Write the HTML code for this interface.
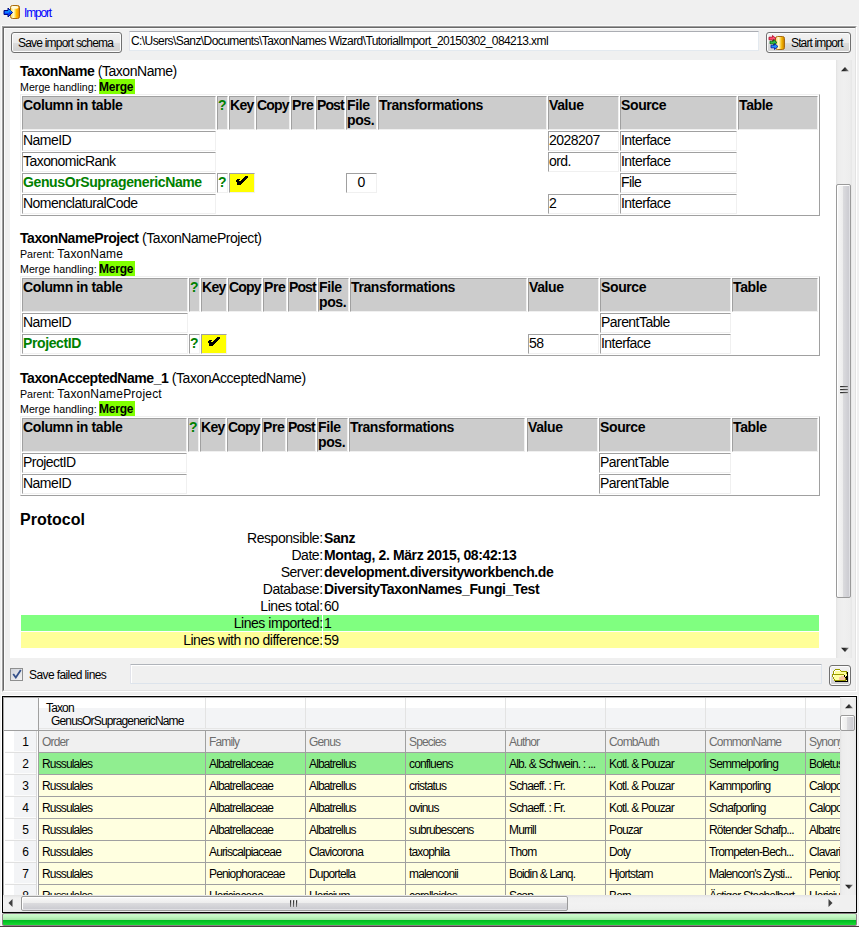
<!DOCTYPE html>
<html><head><meta charset="utf-8"><style>
html,body{margin:0;padding:0;}
body{width:859px;height:927px;position:relative;overflow:hidden;background:#f0f0f0;font-family:"Liberation Sans", sans-serif;color:#000;}
.t{position:absolute;white-space:pre;}
.r{position:absolute;}
</style></head><body>

<svg style="position:absolute;left:3px;top:4px" width="18" height="16" viewBox="0 0 18 16">
<defs><linearGradient id="cyl" x1="0" x2="1" y1="0" y2="0"><stop offset="0" stop-color="#f7d35a"/><stop offset="0.35" stop-color="#fffbd0"/><stop offset="0.65" stop-color="#ffc400"/><stop offset="0.85" stop-color="#ff9a00"/><stop offset="1" stop-color="#c57a00"/></linearGradient></defs>
<rect x="7.5" y="1.5" width="9" height="13" rx="2" fill="url(#cyl)" stroke="#a86a10" stroke-width="1"/><ellipse cx="11.8" cy="3.4" rx="3.6" ry="1.3" fill="#fffbe0"/>
<path d="M1 6.5 H5 V4 L9.5 8.5 L5 13 V10.5 H1 Z" fill="#0a40ff" stroke="#000a80" stroke-width="1"/><path d="M2 8 H6 V5.8 M6.5 6 L8.5 8.3" fill="none" stroke="#10b8ff" stroke-width="1"/>
</svg>
<div class="t" style="left:24px;top:6.84px;font-size:12px;line-height:12px;color:#0000ff;letter-spacing:-1.2px;">Import</div>
<div class="r" style="left:1px;top:25px;width:857px;height:668px;border-top:1px solid #fafafa;border-left:1px solid #fafafa;box-sizing:border-box;"></div>
<div class="r" style="left:2px;top:26px;width:855px;height:666px;border-top:1px solid #a0a0a0;border-left:1px solid #a0a0a0;border-right:1px solid #ffffff;border-bottom:1px solid #ffffff;box-sizing:border-box;"></div>
<div class="r" style="left:3px;top:27px;width:853px;height:664px;border-top:1px solid #696969;border-left:1px solid #696969;border-right:1px solid #e3e3e3;border-bottom:1px solid #e3e3e3;box-sizing:border-box;"></div>
<div class="r" style="left:4px;top:28px;width:851px;height:662px;border-top:1px solid #fbfbfb;border-left:1px solid #fbfbfb;box-sizing:border-box;"></div>
<div class="r" style="left:11px;top:32px;width:111px;height:21px;border:1px solid #707070;border-radius:3px;box-sizing:border-box;background:linear-gradient(#f2f2f2 0%,#ebebeb 50%,#dddddd 51%,#cfcfcf 100%);box-shadow:inset 0 0 0 1px #fcfcfc;"></div>
<div class="t" style="left:18px;top:36.84px;font-size:12px;line-height:12px;letter-spacing:-0.79px;">Save import schema</div>
<div class="r" style="left:129px;top:31px;width:630px;height:20px;background:#fff;border:1px solid #abadb3;border-left-color:#e2e3ea;border-right-color:#e3e9ef;border-bottom-color:#e3e9ef;box-sizing:border-box;"></div>
<div class="t" style="left:131px;top:34.84px;font-size:12px;line-height:12px;letter-spacing:-0.58px;">C:\Users\Sanz\Documents\TaxonNames Wizard\TutorialImport_20150302_084213.xml</div>
<div class="r" style="left:766px;top:32px;width:85px;height:21px;border:1px solid #707070;border-radius:3px;box-sizing:border-box;background:linear-gradient(#f2f2f2 0%,#ebebeb 50%,#dddddd 51%,#cfcfcf 100%);box-shadow:inset 0 0 0 1px #fcfcfc;"></div>
<svg style="position:absolute;left:768px;top:34px" width="18" height="17" viewBox="0 0 18 17">
<defs><linearGradient id="cyl2" x1="0" x2="1" y1="0" y2="0"><stop offset="0" stop-color="#f7d35a"/><stop offset="0.35" stop-color="#fffbd0"/><stop offset="0.7" stop-color="#f3b400"/><stop offset="1" stop-color="#c57a00"/></linearGradient></defs>
<rect x="7.5" y="2.5" width="9" height="13" rx="2" fill="url(#cyl2)" stroke="#a86a10" stroke-width="1"/>
<path d="M1 3.2 H4.5 V1.5 L8 4.5 L4.5 7.5 V5.8 H1 Z" fill="#ff5070" stroke="#b00020" stroke-width="0.8"/>
<path d="M2 7.2 H5.5 V5.5 L9 8.5 L5.5 11.5 V9.8 H2 Z" fill="#30c040" stroke="#006010" stroke-width="0.8"/>
<path d="M3 11.2 H6.5 V9.5 L10 12.5 L6.5 15.5 V13.8 H3 Z" fill="#2090ff" stroke="#0010a0" stroke-width="0.8"/>
</svg>
<div class="t" style="left:791px;top:36.84px;font-size:12px;line-height:12px;letter-spacing:-0.86px;">Start import</div>
<div class="r" style="left:10px;top:60px;width:826px;height:598px;background:#fff;"></div>
<div class="t" style="left:20px;top:64.15px;font-size:14px;line-height:14px;letter-spacing:-0.45px;"><b>TaxonName</b> (TaxonName)</div>
<div class="t" style="left:20px;top:82.47px;font-size:10.67px;line-height:10.67px;letter-spacing:0.02px;">Merge handling: </div>
<div class="r" style="left:99px;top:79px;width:36px;height:16px;background:#80ff00;"></div>
<div class="t" style="left:99px;top:81.34px;font-size:12px;line-height:12px;font-weight:bold;letter-spacing:-0.2px;">Merge</div>
<div class="r" style="left:20px;top:94px;width:800px;height:122px;border-top:1px solid #f0f0f0;border-left:1px solid #f0f0f0;border-right:1px solid #a0a0a0;border-bottom:1px solid #a0a0a0;box-sizing:border-box;"></div>
<div class="r" style="left:22px;top:96px;width:194px;height:34px;background:#cccccc;border-top:1px solid #a0a0a0;border-left:1px solid #a0a0a0;border-right:1px solid #f0f0f0;border-bottom:1px solid #f0f0f0;box-sizing:border-box;"></div>
<div class="t" style="left:23px;top:98.15px;font-size:14px;line-height:14px;font-weight:bold;letter-spacing:-0.38px;">Column in table</div>
<div class="r" style="left:217px;top:96px;width:11px;height:34px;background:#cccccc;border-top:1px solid #a0a0a0;border-left:1px solid #a0a0a0;border-right:1px solid #f0f0f0;border-bottom:1px solid #f0f0f0;box-sizing:border-box;"></div>
<div class="t" style="left:218px;top:98.15px;font-size:14px;line-height:14px;font-weight:bold;color:#008000;">?</div>
<div class="r" style="left:229px;top:96px;width:26px;height:34px;background:#cccccc;border-top:1px solid #a0a0a0;border-left:1px solid #a0a0a0;border-right:1px solid #f0f0f0;border-bottom:1px solid #f0f0f0;box-sizing:border-box;"></div>
<div class="t" style="left:230px;top:98.15px;font-size:14px;line-height:14px;font-weight:bold;letter-spacing:-0.7px;">Key</div>
<div class="r" style="left:256px;top:96px;width:34px;height:34px;background:#cccccc;border-top:1px solid #a0a0a0;border-left:1px solid #a0a0a0;border-right:1px solid #f0f0f0;border-bottom:1px solid #f0f0f0;box-sizing:border-box;"></div>
<div class="t" style="left:257px;top:98.15px;font-size:14px;line-height:14px;font-weight:bold;letter-spacing:-0.85px;">Copy</div>
<div class="r" style="left:291px;top:96px;width:24px;height:34px;background:#cccccc;border-top:1px solid #a0a0a0;border-left:1px solid #a0a0a0;border-right:1px solid #f0f0f0;border-bottom:1px solid #f0f0f0;box-sizing:border-box;"></div>
<div class="t" style="left:292px;top:98.15px;font-size:14px;line-height:14px;font-weight:bold;letter-spacing:-0.38px;">Pre</div>
<div class="r" style="left:316px;top:96px;width:29px;height:34px;background:#cccccc;border-top:1px solid #a0a0a0;border-left:1px solid #a0a0a0;border-right:1px solid #f0f0f0;border-bottom:1px solid #f0f0f0;box-sizing:border-box;"></div>
<div class="t" style="left:317px;top:98.15px;font-size:14px;line-height:14px;font-weight:bold;letter-spacing:-0.9px;">Post</div>
<div class="r" style="left:346px;top:96px;width:31px;height:34px;background:#cccccc;border-top:1px solid #a0a0a0;border-left:1px solid #a0a0a0;border-right:1px solid #f0f0f0;border-bottom:1px solid #f0f0f0;box-sizing:border-box;"></div>
<div class="t" style="left:347px;top:98.15px;font-size:14px;line-height:14px;font-weight:bold;letter-spacing:-0.38px;">File</div>
<div class="t" style="left:347px;top:113.15px;font-size:14px;line-height:14px;font-weight:bold;letter-spacing:-0.38px;">pos.</div>
<div class="r" style="left:378px;top:96px;width:169px;height:34px;background:#cccccc;border-top:1px solid #a0a0a0;border-left:1px solid #a0a0a0;border-right:1px solid #f0f0f0;border-bottom:1px solid #f0f0f0;box-sizing:border-box;"></div>
<div class="t" style="left:379px;top:98.15px;font-size:14px;line-height:14px;font-weight:bold;letter-spacing:-0.38px;">Transformations</div>
<div class="r" style="left:548px;top:96px;width:71px;height:34px;background:#cccccc;border-top:1px solid #a0a0a0;border-left:1px solid #a0a0a0;border-right:1px solid #f0f0f0;border-bottom:1px solid #f0f0f0;box-sizing:border-box;"></div>
<div class="t" style="left:549px;top:98.15px;font-size:14px;line-height:14px;font-weight:bold;letter-spacing:-0.38px;">Value</div>
<div class="r" style="left:620px;top:96px;width:117px;height:34px;background:#cccccc;border-top:1px solid #a0a0a0;border-left:1px solid #a0a0a0;border-right:1px solid #f0f0f0;border-bottom:1px solid #f0f0f0;box-sizing:border-box;"></div>
<div class="t" style="left:621px;top:98.15px;font-size:14px;line-height:14px;font-weight:bold;letter-spacing:-0.38px;">Source</div>
<div class="r" style="left:738px;top:96px;width:80px;height:34px;background:#cccccc;border-top:1px solid #a0a0a0;border-left:1px solid #a0a0a0;border-right:1px solid #f0f0f0;border-bottom:1px solid #f0f0f0;box-sizing:border-box;"></div>
<div class="t" style="left:739px;top:98.15px;font-size:14px;line-height:14px;font-weight:bold;letter-spacing:-0.38px;">Table</div>
<div class="r" style="left:22px;top:131px;width:194px;height:20px;background:#fff;border-top:1px solid #a0a0a0;border-left:1px solid #a0a0a0;border-right:1px solid #f0f0f0;border-bottom:1px solid #f0f0f0;box-sizing:border-box;"></div>
<div class="t" style="left:23px;top:133.15px;font-size:14px;line-height:14px;letter-spacing:-0.55px;">NameID</div>
<div class="r" style="left:548px;top:131px;width:71px;height:20px;background:#fff;border-top:1px solid #a0a0a0;border-left:1px solid #a0a0a0;border-right:1px solid #f0f0f0;border-bottom:1px solid #f0f0f0;box-sizing:border-box;"></div>
<div class="t" style="left:549px;top:133.15px;font-size:14px;line-height:14px;letter-spacing:-0.55px;">2028207</div>
<div class="r" style="left:620px;top:131px;width:117px;height:20px;background:#fff;border-top:1px solid #a0a0a0;border-left:1px solid #a0a0a0;border-right:1px solid #f0f0f0;border-bottom:1px solid #f0f0f0;box-sizing:border-box;"></div>
<div class="t" style="left:621px;top:133.15px;font-size:14px;line-height:14px;letter-spacing:-0.55px;">Interface</div>
<div class="r" style="left:22px;top:152px;width:194px;height:20px;background:#fff;border-top:1px solid #a0a0a0;border-left:1px solid #a0a0a0;border-right:1px solid #f0f0f0;border-bottom:1px solid #f0f0f0;box-sizing:border-box;"></div>
<div class="t" style="left:23px;top:154.15px;font-size:14px;line-height:14px;letter-spacing:-0.55px;">TaxonomicRank</div>
<div class="r" style="left:548px;top:152px;width:71px;height:20px;background:#fff;border-top:1px solid #a0a0a0;border-left:1px solid #a0a0a0;border-right:1px solid #f0f0f0;border-bottom:1px solid #f0f0f0;box-sizing:border-box;"></div>
<div class="t" style="left:549px;top:154.15px;font-size:14px;line-height:14px;letter-spacing:-0.55px;">ord.</div>
<div class="r" style="left:620px;top:152px;width:117px;height:20px;background:#fff;border-top:1px solid #a0a0a0;border-left:1px solid #a0a0a0;border-right:1px solid #f0f0f0;border-bottom:1px solid #f0f0f0;box-sizing:border-box;"></div>
<div class="t" style="left:621px;top:154.15px;font-size:14px;line-height:14px;letter-spacing:-0.55px;">Interface</div>
<div class="r" style="left:22px;top:173px;width:194px;height:20px;background:#fff;border-top:1px solid #a0a0a0;border-left:1px solid #a0a0a0;border-right:1px solid #f0f0f0;border-bottom:1px solid #f0f0f0;box-sizing:border-box;"></div>
<div class="t" style="left:23px;top:175.15px;font-size:14px;line-height:14px;font-weight:bold;color:#008000;letter-spacing:-0.38px;">GenusOrSupragenericName</div>
<div class="r" style="left:217px;top:173px;width:11px;height:20px;background:#fff;border-top:1px solid #a0a0a0;border-left:1px solid #a0a0a0;border-right:1px solid #f0f0f0;border-bottom:1px solid #f0f0f0;box-sizing:border-box;"></div>
<div class="t" style="left:218px;top:175.15px;font-size:14px;line-height:14px;font-weight:bold;color:#008000;">?</div>
<div class="r" style="left:229px;top:173px;width:26px;height:20px;background:#ffff00;border-top:1px solid #a0a0a0;border-left:1px solid #a0a0a0;border-right:1px solid #f0f0f0;border-bottom:1px solid #f0f0f0;box-sizing:border-box;"></div>
<div class="r" style="left:245px;top:176px;width:3px;height:1px;background:#000;"></div>
<div class="r" style="left:244px;top:177px;width:4px;height:1px;background:#000;"></div>
<div class="r" style="left:243px;top:178px;width:4px;height:1px;background:#000;"></div>
<div class="r" style="left:237px;top:179px;width:3px;height:1px;background:#000;"></div>
<div class="r" style="left:242px;top:179px;width:4px;height:1px;background:#000;"></div>
<div class="r" style="left:236px;top:180px;width:3px;height:1px;background:#000;"></div>
<div class="r" style="left:241px;top:180px;width:4px;height:1px;background:#000;"></div>
<div class="r" style="left:236px;top:181px;width:8px;height:1px;background:#000;"></div>
<div class="r" style="left:237px;top:182px;width:6px;height:1px;background:#000;"></div>
<div class="r" style="left:237px;top:183px;width:5px;height:1px;background:#000;"></div>
<div class="r" style="left:237px;top:184px;width:4px;height:1px;background:#000;"></div>
<div class="r" style="left:346px;top:173px;width:31px;height:20px;background:#fff;border-top:1px solid #a0a0a0;border-left:1px solid #a0a0a0;border-right:1px solid #f0f0f0;border-bottom:1px solid #f0f0f0;box-sizing:border-box;"></div>
<div class="t" style="left:346.5px;width:30px;text-align:center;top:175.15px;font-size:14px;line-height:14px;">0</div>
<div class="r" style="left:620px;top:173px;width:117px;height:20px;background:#fff;border-top:1px solid #a0a0a0;border-left:1px solid #a0a0a0;border-right:1px solid #f0f0f0;border-bottom:1px solid #f0f0f0;box-sizing:border-box;"></div>
<div class="t" style="left:621px;top:175.15px;font-size:14px;line-height:14px;letter-spacing:-0.55px;">File</div>
<div class="r" style="left:22px;top:194px;width:194px;height:20px;background:#fff;border-top:1px solid #a0a0a0;border-left:1px solid #a0a0a0;border-right:1px solid #f0f0f0;border-bottom:1px solid #f0f0f0;box-sizing:border-box;"></div>
<div class="t" style="left:23px;top:196.15px;font-size:14px;line-height:14px;letter-spacing:-0.55px;">NomenclaturalCode</div>
<div class="r" style="left:548px;top:194px;width:71px;height:20px;background:#fff;border-top:1px solid #a0a0a0;border-left:1px solid #a0a0a0;border-right:1px solid #f0f0f0;border-bottom:1px solid #f0f0f0;box-sizing:border-box;"></div>
<div class="t" style="left:549px;top:196.15px;font-size:14px;line-height:14px;letter-spacing:-0.55px;">2</div>
<div class="r" style="left:620px;top:194px;width:117px;height:20px;background:#fff;border-top:1px solid #a0a0a0;border-left:1px solid #a0a0a0;border-right:1px solid #f0f0f0;border-bottom:1px solid #f0f0f0;box-sizing:border-box;"></div>
<div class="t" style="left:621px;top:196.15px;font-size:14px;line-height:14px;letter-spacing:-0.55px;">Interface</div>
<div class="t" style="left:20px;top:230.65px;font-size:14px;line-height:14px;letter-spacing:-0.45px;"><b>TaxonNameProject</b> (TaxonNameProject)</div>
<div class="t" style="left:20px;top:248.97px;font-size:10.67px;line-height:10.67px;letter-spacing:0px">Parent: <span style="font-size:12px;letter-spacing:0.2px">TaxonName</span></div>
<div class="t" style="left:20px;top:264.47px;font-size:10.67px;line-height:10.67px;letter-spacing:0.02px;">Merge handling: </div>
<div class="r" style="left:99px;top:261px;width:36px;height:16px;background:#80ff00;"></div>
<div class="t" style="left:99px;top:263.34px;font-size:12px;line-height:12px;font-weight:bold;letter-spacing:-0.2px;">Merge</div>
<div class="r" style="left:20px;top:276px;width:800px;height:80px;border-top:1px solid #f0f0f0;border-left:1px solid #f0f0f0;border-right:1px solid #a0a0a0;border-bottom:1px solid #a0a0a0;box-sizing:border-box;"></div>
<div class="r" style="left:22px;top:278px;width:166px;height:34px;background:#cccccc;border-top:1px solid #a0a0a0;border-left:1px solid #a0a0a0;border-right:1px solid #f0f0f0;border-bottom:1px solid #f0f0f0;box-sizing:border-box;"></div>
<div class="t" style="left:23px;top:280.15px;font-size:14px;line-height:14px;font-weight:bold;letter-spacing:-0.38px;">Column in table</div>
<div class="r" style="left:189px;top:278px;width:11px;height:34px;background:#cccccc;border-top:1px solid #a0a0a0;border-left:1px solid #a0a0a0;border-right:1px solid #f0f0f0;border-bottom:1px solid #f0f0f0;box-sizing:border-box;"></div>
<div class="t" style="left:190px;top:280.15px;font-size:14px;line-height:14px;font-weight:bold;color:#008000;">?</div>
<div class="r" style="left:201px;top:278px;width:26px;height:34px;background:#cccccc;border-top:1px solid #a0a0a0;border-left:1px solid #a0a0a0;border-right:1px solid #f0f0f0;border-bottom:1px solid #f0f0f0;box-sizing:border-box;"></div>
<div class="t" style="left:202px;top:280.15px;font-size:14px;line-height:14px;font-weight:bold;letter-spacing:-0.7px;">Key</div>
<div class="r" style="left:228px;top:278px;width:34px;height:34px;background:#cccccc;border-top:1px solid #a0a0a0;border-left:1px solid #a0a0a0;border-right:1px solid #f0f0f0;border-bottom:1px solid #f0f0f0;box-sizing:border-box;"></div>
<div class="t" style="left:229px;top:280.15px;font-size:14px;line-height:14px;font-weight:bold;letter-spacing:-0.85px;">Copy</div>
<div class="r" style="left:263px;top:278px;width:24px;height:34px;background:#cccccc;border-top:1px solid #a0a0a0;border-left:1px solid #a0a0a0;border-right:1px solid #f0f0f0;border-bottom:1px solid #f0f0f0;box-sizing:border-box;"></div>
<div class="t" style="left:264px;top:280.15px;font-size:14px;line-height:14px;font-weight:bold;letter-spacing:-0.38px;">Pre</div>
<div class="r" style="left:288px;top:278px;width:29px;height:34px;background:#cccccc;border-top:1px solid #a0a0a0;border-left:1px solid #a0a0a0;border-right:1px solid #f0f0f0;border-bottom:1px solid #f0f0f0;box-sizing:border-box;"></div>
<div class="t" style="left:289px;top:280.15px;font-size:14px;line-height:14px;font-weight:bold;letter-spacing:-0.9px;">Post</div>
<div class="r" style="left:318px;top:278px;width:31px;height:34px;background:#cccccc;border-top:1px solid #a0a0a0;border-left:1px solid #a0a0a0;border-right:1px solid #f0f0f0;border-bottom:1px solid #f0f0f0;box-sizing:border-box;"></div>
<div class="t" style="left:319px;top:280.15px;font-size:14px;line-height:14px;font-weight:bold;letter-spacing:-0.38px;">File</div>
<div class="t" style="left:319px;top:295.15px;font-size:14px;line-height:14px;font-weight:bold;letter-spacing:-0.38px;">pos.</div>
<div class="r" style="left:350px;top:278px;width:177px;height:34px;background:#cccccc;border-top:1px solid #a0a0a0;border-left:1px solid #a0a0a0;border-right:1px solid #f0f0f0;border-bottom:1px solid #f0f0f0;box-sizing:border-box;"></div>
<div class="t" style="left:351px;top:280.15px;font-size:14px;line-height:14px;font-weight:bold;letter-spacing:-0.38px;">Transformations</div>
<div class="r" style="left:528px;top:278px;width:71px;height:34px;background:#cccccc;border-top:1px solid #a0a0a0;border-left:1px solid #a0a0a0;border-right:1px solid #f0f0f0;border-bottom:1px solid #f0f0f0;box-sizing:border-box;"></div>
<div class="t" style="left:529px;top:280.15px;font-size:14px;line-height:14px;font-weight:bold;letter-spacing:-0.38px;">Value</div>
<div class="r" style="left:600px;top:278px;width:131px;height:34px;background:#cccccc;border-top:1px solid #a0a0a0;border-left:1px solid #a0a0a0;border-right:1px solid #f0f0f0;border-bottom:1px solid #f0f0f0;box-sizing:border-box;"></div>
<div class="t" style="left:601px;top:280.15px;font-size:14px;line-height:14px;font-weight:bold;letter-spacing:-0.38px;">Source</div>
<div class="r" style="left:732px;top:278px;width:86px;height:34px;background:#cccccc;border-top:1px solid #a0a0a0;border-left:1px solid #a0a0a0;border-right:1px solid #f0f0f0;border-bottom:1px solid #f0f0f0;box-sizing:border-box;"></div>
<div class="t" style="left:733px;top:280.15px;font-size:14px;line-height:14px;font-weight:bold;letter-spacing:-0.38px;">Table</div>
<div class="r" style="left:22px;top:313px;width:166px;height:20px;background:#fff;border-top:1px solid #a0a0a0;border-left:1px solid #a0a0a0;border-right:1px solid #f0f0f0;border-bottom:1px solid #f0f0f0;box-sizing:border-box;"></div>
<div class="t" style="left:23px;top:315.15px;font-size:14px;line-height:14px;letter-spacing:-0.55px;">NameID</div>
<div class="r" style="left:600px;top:313px;width:131px;height:20px;background:#fff;border-top:1px solid #a0a0a0;border-left:1px solid #a0a0a0;border-right:1px solid #f0f0f0;border-bottom:1px solid #f0f0f0;box-sizing:border-box;"></div>
<div class="t" style="left:601px;top:315.15px;font-size:14px;line-height:14px;letter-spacing:-0.55px;">ParentTable</div>
<div class="r" style="left:22px;top:334px;width:166px;height:20px;background:#fff;border-top:1px solid #a0a0a0;border-left:1px solid #a0a0a0;border-right:1px solid #f0f0f0;border-bottom:1px solid #f0f0f0;box-sizing:border-box;"></div>
<div class="t" style="left:23px;top:336.15px;font-size:14px;line-height:14px;font-weight:bold;color:#008000;letter-spacing:-0.38px;">ProjectID</div>
<div class="r" style="left:189px;top:334px;width:11px;height:20px;background:#fff;border-top:1px solid #a0a0a0;border-left:1px solid #a0a0a0;border-right:1px solid #f0f0f0;border-bottom:1px solid #f0f0f0;box-sizing:border-box;"></div>
<div class="t" style="left:190px;top:336.15px;font-size:14px;line-height:14px;font-weight:bold;color:#008000;">?</div>
<div class="r" style="left:201px;top:334px;width:26px;height:20px;background:#ffff00;border-top:1px solid #a0a0a0;border-left:1px solid #a0a0a0;border-right:1px solid #f0f0f0;border-bottom:1px solid #f0f0f0;box-sizing:border-box;"></div>
<div class="r" style="left:217px;top:337px;width:3px;height:1px;background:#000;"></div>
<div class="r" style="left:216px;top:338px;width:4px;height:1px;background:#000;"></div>
<div class="r" style="left:215px;top:339px;width:4px;height:1px;background:#000;"></div>
<div class="r" style="left:209px;top:340px;width:3px;height:1px;background:#000;"></div>
<div class="r" style="left:214px;top:340px;width:4px;height:1px;background:#000;"></div>
<div class="r" style="left:208px;top:341px;width:3px;height:1px;background:#000;"></div>
<div class="r" style="left:213px;top:341px;width:4px;height:1px;background:#000;"></div>
<div class="r" style="left:208px;top:342px;width:8px;height:1px;background:#000;"></div>
<div class="r" style="left:209px;top:343px;width:6px;height:1px;background:#000;"></div>
<div class="r" style="left:209px;top:344px;width:5px;height:1px;background:#000;"></div>
<div class="r" style="left:209px;top:345px;width:4px;height:1px;background:#000;"></div>
<div class="r" style="left:528px;top:334px;width:71px;height:20px;background:#fff;border-top:1px solid #a0a0a0;border-left:1px solid #a0a0a0;border-right:1px solid #f0f0f0;border-bottom:1px solid #f0f0f0;box-sizing:border-box;"></div>
<div class="t" style="left:529px;top:336.15px;font-size:14px;line-height:14px;letter-spacing:-0.55px;">58</div>
<div class="r" style="left:600px;top:334px;width:131px;height:20px;background:#fff;border-top:1px solid #a0a0a0;border-left:1px solid #a0a0a0;border-right:1px solid #f0f0f0;border-bottom:1px solid #f0f0f0;box-sizing:border-box;"></div>
<div class="t" style="left:601px;top:336.15px;font-size:14px;line-height:14px;letter-spacing:-0.55px;">Interface</div>
<div class="t" style="left:20px;top:370.65px;font-size:14px;line-height:14px;letter-spacing:-0.45px;"><b>TaxonAcceptedName_1</b> (TaxonAcceptedName)</div>
<div class="t" style="left:20px;top:388.97px;font-size:10.67px;line-height:10.67px;letter-spacing:0px">Parent: <span style="font-size:12px;letter-spacing:0.2px">TaxonNameProject</span></div>
<div class="t" style="left:20px;top:404.47px;font-size:10.67px;line-height:10.67px;letter-spacing:0.02px;">Merge handling: </div>
<div class="r" style="left:99px;top:401px;width:36px;height:16px;background:#80ff00;"></div>
<div class="t" style="left:99px;top:403.34px;font-size:12px;line-height:12px;font-weight:bold;letter-spacing:-0.2px;">Merge</div>
<div class="r" style="left:20px;top:416px;width:800px;height:80px;border-top:1px solid #f0f0f0;border-left:1px solid #f0f0f0;border-right:1px solid #a0a0a0;border-bottom:1px solid #a0a0a0;box-sizing:border-box;"></div>
<div class="r" style="left:22px;top:418px;width:165px;height:34px;background:#cccccc;border-top:1px solid #a0a0a0;border-left:1px solid #a0a0a0;border-right:1px solid #f0f0f0;border-bottom:1px solid #f0f0f0;box-sizing:border-box;"></div>
<div class="t" style="left:23px;top:420.15px;font-size:14px;line-height:14px;font-weight:bold;letter-spacing:-0.38px;">Column in table</div>
<div class="r" style="left:188px;top:418px;width:11px;height:34px;background:#cccccc;border-top:1px solid #a0a0a0;border-left:1px solid #a0a0a0;border-right:1px solid #f0f0f0;border-bottom:1px solid #f0f0f0;box-sizing:border-box;"></div>
<div class="t" style="left:189px;top:420.15px;font-size:14px;line-height:14px;font-weight:bold;color:#008000;">?</div>
<div class="r" style="left:200px;top:418px;width:26px;height:34px;background:#cccccc;border-top:1px solid #a0a0a0;border-left:1px solid #a0a0a0;border-right:1px solid #f0f0f0;border-bottom:1px solid #f0f0f0;box-sizing:border-box;"></div>
<div class="t" style="left:201px;top:420.15px;font-size:14px;line-height:14px;font-weight:bold;letter-spacing:-0.7px;">Key</div>
<div class="r" style="left:227px;top:418px;width:34px;height:34px;background:#cccccc;border-top:1px solid #a0a0a0;border-left:1px solid #a0a0a0;border-right:1px solid #f0f0f0;border-bottom:1px solid #f0f0f0;box-sizing:border-box;"></div>
<div class="t" style="left:228px;top:420.15px;font-size:14px;line-height:14px;font-weight:bold;letter-spacing:-0.85px;">Copy</div>
<div class="r" style="left:262px;top:418px;width:24px;height:34px;background:#cccccc;border-top:1px solid #a0a0a0;border-left:1px solid #a0a0a0;border-right:1px solid #f0f0f0;border-bottom:1px solid #f0f0f0;box-sizing:border-box;"></div>
<div class="t" style="left:263px;top:420.15px;font-size:14px;line-height:14px;font-weight:bold;letter-spacing:-0.38px;">Pre</div>
<div class="r" style="left:287px;top:418px;width:29px;height:34px;background:#cccccc;border-top:1px solid #a0a0a0;border-left:1px solid #a0a0a0;border-right:1px solid #f0f0f0;border-bottom:1px solid #f0f0f0;box-sizing:border-box;"></div>
<div class="t" style="left:288px;top:420.15px;font-size:14px;line-height:14px;font-weight:bold;letter-spacing:-0.9px;">Post</div>
<div class="r" style="left:317px;top:418px;width:31px;height:34px;background:#cccccc;border-top:1px solid #a0a0a0;border-left:1px solid #a0a0a0;border-right:1px solid #f0f0f0;border-bottom:1px solid #f0f0f0;box-sizing:border-box;"></div>
<div class="t" style="left:318px;top:420.15px;font-size:14px;line-height:14px;font-weight:bold;letter-spacing:-0.38px;">File</div>
<div class="t" style="left:318px;top:435.15px;font-size:14px;line-height:14px;font-weight:bold;letter-spacing:-0.38px;">pos.</div>
<div class="r" style="left:349px;top:418px;width:176px;height:34px;background:#cccccc;border-top:1px solid #a0a0a0;border-left:1px solid #a0a0a0;border-right:1px solid #f0f0f0;border-bottom:1px solid #f0f0f0;box-sizing:border-box;"></div>
<div class="t" style="left:350px;top:420.15px;font-size:14px;line-height:14px;font-weight:bold;letter-spacing:-0.38px;">Transformations</div>
<div class="r" style="left:527px;top:418px;width:71px;height:34px;background:#cccccc;border-top:1px solid #a0a0a0;border-left:1px solid #a0a0a0;border-right:1px solid #f0f0f0;border-bottom:1px solid #f0f0f0;box-sizing:border-box;"></div>
<div class="t" style="left:528px;top:420.15px;font-size:14px;line-height:14px;font-weight:bold;letter-spacing:-0.38px;">Value</div>
<div class="r" style="left:599px;top:418px;width:132px;height:34px;background:#cccccc;border-top:1px solid #a0a0a0;border-left:1px solid #a0a0a0;border-right:1px solid #f0f0f0;border-bottom:1px solid #f0f0f0;box-sizing:border-box;"></div>
<div class="t" style="left:600px;top:420.15px;font-size:14px;line-height:14px;font-weight:bold;letter-spacing:-0.38px;">Source</div>
<div class="r" style="left:732px;top:418px;width:86px;height:34px;background:#cccccc;border-top:1px solid #a0a0a0;border-left:1px solid #a0a0a0;border-right:1px solid #f0f0f0;border-bottom:1px solid #f0f0f0;box-sizing:border-box;"></div>
<div class="t" style="left:733px;top:420.15px;font-size:14px;line-height:14px;font-weight:bold;letter-spacing:-0.38px;">Table</div>
<div class="r" style="left:22px;top:453px;width:165px;height:20px;background:#fff;border-top:1px solid #a0a0a0;border-left:1px solid #a0a0a0;border-right:1px solid #f0f0f0;border-bottom:1px solid #f0f0f0;box-sizing:border-box;"></div>
<div class="t" style="left:23px;top:455.15px;font-size:14px;line-height:14px;letter-spacing:-0.55px;">ProjectID</div>
<div class="r" style="left:599px;top:453px;width:132px;height:20px;background:#fff;border-top:1px solid #a0a0a0;border-left:1px solid #a0a0a0;border-right:1px solid #f0f0f0;border-bottom:1px solid #f0f0f0;box-sizing:border-box;"></div>
<div class="t" style="left:600px;top:455.15px;font-size:14px;line-height:14px;letter-spacing:-0.55px;">ParentTable</div>
<div class="r" style="left:22px;top:474px;width:165px;height:20px;background:#fff;border-top:1px solid #a0a0a0;border-left:1px solid #a0a0a0;border-right:1px solid #f0f0f0;border-bottom:1px solid #f0f0f0;box-sizing:border-box;"></div>
<div class="t" style="left:23px;top:476.15px;font-size:14px;line-height:14px;letter-spacing:-0.55px;">NameID</div>
<div class="r" style="left:599px;top:474px;width:132px;height:20px;background:#fff;border-top:1px solid #a0a0a0;border-left:1px solid #a0a0a0;border-right:1px solid #f0f0f0;border-bottom:1px solid #f0f0f0;box-sizing:border-box;"></div>
<div class="t" style="left:600px;top:476.15px;font-size:14px;line-height:14px;letter-spacing:-0.55px;">ParentTable</div>
<div class="t" style="left:20px;top:512.46px;font-size:16px;line-height:16px;font-weight:bold;letter-spacing:0px;">Protocol</div>
<div class="t" style="right:536.4px;top:530.65px;font-size:14px;line-height:14px;letter-spacing:-0.45px;">Responsible:</div>
<div class="t" style="left:324px;top:530.65px;font-size:14px;line-height:14px;font-weight:bold;letter-spacing:-0.38px;">Sanz</div>
<div class="t" style="right:536.4px;top:547.65px;font-size:14px;line-height:14px;letter-spacing:-0.45px;">Date:</div>
<div class="t" style="left:324px;top:547.65px;font-size:14px;line-height:14px;font-weight:bold;letter-spacing:-0.38px;">Montag, 2. März 2015, 08:42:13</div>
<div class="t" style="right:536.4px;top:564.65px;font-size:14px;line-height:14px;letter-spacing:-0.45px;">Server:</div>
<div class="t" style="left:324px;top:564.65px;font-size:14px;line-height:14px;font-weight:bold;letter-spacing:-0.38px;">development.diversityworkbench.de</div>
<div class="t" style="right:536.4px;top:581.65px;font-size:14px;line-height:14px;letter-spacing:-0.45px;">Database:</div>
<div class="t" style="left:324px;top:581.65px;font-size:14px;line-height:14px;font-weight:bold;letter-spacing:-0.38px;">DiversityTaxonNames_Fungi_Test</div>
<div class="t" style="right:536.4px;top:598.65px;font-size:14px;line-height:14px;letter-spacing:-0.45px;">Lines total:</div>
<div class="t" style="left:324px;top:598.65px;font-size:14px;line-height:14px;letter-spacing:-0.55px;">60</div>
<div class="r" style="left:21px;top:615px;width:301px;height:16px;background:#80ff80;"></div>
<div class="r" style="left:323px;top:615px;width:496px;height:16px;background:#80ff80;"></div>
<div class="t" style="right:536.4px;top:615.65px;font-size:14px;line-height:14px;letter-spacing:-0.45px;">Lines imported:</div>
<div class="t" style="left:324px;top:615.65px;font-size:14px;line-height:14px;letter-spacing:-0.55px;">1</div>
<div class="r" style="left:21px;top:632px;width:301px;height:16px;background:#ffff99;"></div>
<div class="r" style="left:323px;top:632px;width:496px;height:16px;background:#ffff99;"></div>
<div class="t" style="right:536.4px;top:632.65px;font-size:14px;line-height:14px;letter-spacing:-0.45px;">Lines with no difference:</div>
<div class="t" style="left:324px;top:632.65px;font-size:14px;line-height:14px;letter-spacing:-0.55px;">59</div>
<div class="r" style="left:836px;top:60px;width:16px;height:598px;background:linear-gradient(to right,#e2e2e2 0px,#ededed 2px,#f0f0f0 50%,#ededed calc(100% - 2px),#e6e6e6 100%);"></div>
<svg style="position:absolute;left:840.5px;top:66.5px" width="8" height="5" viewBox="0 0 8 5"><defs><linearGradient id="ag60" x1="0" x2="1"><stop offset="0" stop-color="#1a1a1a"/><stop offset="0.5" stop-color="#303030"/><stop offset="1" stop-color="#909090"/></linearGradient></defs><path d="M0 4.2 L4 0 L8 4.2 Z" fill="url(#ag60)"/></svg>
<svg style="position:absolute;left:840.5px;top:646.5px" width="8" height="5" viewBox="0 0 8 5"><defs><linearGradient id="bg60" x1="0" x2="1"><stop offset="0" stop-color="#1a1a1a"/><stop offset="0.5" stop-color="#303030"/><stop offset="1" stop-color="#909090"/></linearGradient></defs><path d="M0 0.8 L4 5 L8 0.8 Z" fill="url(#bg60)"/></svg>
<div class="r" style="left:836px;top:184px;width:15px;height:414px;border:1px solid #9a9a9a;border-radius:2px;box-sizing:border-box;background:linear-gradient(to right,#f8f8f8 0%,#ededed 45%,#dadadd 50%,#c9c9cf 100%);box-shadow:inset 1px 1px 0 #fff, inset -1px 0 0 #e0e0e4;"></div>
<div class="r" style="left:840px;top:386px;width:8px;height:1px;background:linear-gradient(to right,#222,#666);border-radius:1px;"></div>
<div class="r" style="left:840px;top:387px;width:8px;height:1px;background:#c8c8c8;"></div>
<div class="r" style="left:840px;top:389px;width:8px;height:1px;background:linear-gradient(to right,#222,#666);border-radius:1px;"></div>
<div class="r" style="left:840px;top:390px;width:8px;height:1px;background:#c8c8c8;"></div>
<div class="r" style="left:840px;top:392px;width:8px;height:1px;background:linear-gradient(to right,#222,#666);border-radius:1px;"></div>
<div class="r" style="left:840px;top:393px;width:8px;height:1px;background:#c8c8c8;"></div>
<div class="r" style="left:10px;top:668px;width:13px;height:13px;border:1px solid #8e8f8f;box-sizing:border-box;background:linear-gradient(135deg,#cfd3da,#f4f4f4);"></div>
<svg style="position:absolute;left:12px;top:669px" width="10" height="10" viewBox="0 0 10 10"><path d="M1.2 5 L3.8 8.5 L8.8 1" fill="none" stroke="#34508a" stroke-width="1.8"/></svg>
<div class="t" style="left:29px;top:668.84px;font-size:12px;line-height:12px;letter-spacing:-0.6px;">Save failed lines</div>
<div class="r" style="left:130px;top:664px;width:692px;height:20px;background:#f0f0f0;border:1px solid #dde4ec;border-top-color:#b0b4ba;border-left-color:#e2e3ea;box-sizing:border-box;box-shadow:inset 1px 1px 0 #fff;border-radius:1px;"></div>
<div class="r" style="left:829px;top:665px;width:22px;height:21px;border:1px solid #707070;border-radius:3px;box-sizing:border-box;background:linear-gradient(#f2f2f2 0%,#ebebeb 50%,#dddddd 51%,#cfcfcf 100%);box-shadow:inset 0 0 0 1px #fcfcfc;"></div>
<svg style="position:absolute;left:828px;top:664px" width="24" height="24" viewBox="0 0 24 24" shape-rendering="crispEdges"><rect x="6" y="7" width="12" height="3" fill="#ffff99"/><rect x="16" y="8" width="3" height="9" fill="#ffff99"/><rect x="6" y="6" width="6" height="1" fill="#ffffff"/><rect x="6" y="7" width="1" height="3" fill="#ffffff"/><rect x="5" y="11" width="12" height="5" fill="#ffffa8"/><rect x="11" y="13" width="6" height="3" fill="#f8c8a0"/><rect x="13" y="12" width="3" height="1" fill="#f8c8a0"/><rect x="5" y="11" width="1" height="4" fill="#ffffff"/><rect x="7" y="5" width="5" height="1" fill="#999900"/><rect x="6" y="6" width="1" height="1" fill="#999900"/><rect x="12" y="6" width="1" height="1" fill="#999900"/><rect x="5" y="7" width="1" height="3" fill="#999900"/><rect x="13" y="7" width="6" height="1" fill="#999900"/><rect x="18" y="8" width="1" height="2" fill="#999900"/><rect x="4" y="10" width="12" height="1" fill="#999900"/><rect x="4" y="11" width="1" height="2" fill="#999900"/><rect x="5" y="13" width="1" height="2" fill="#999900"/><rect x="6" y="15" width="1" height="1" fill="#999900"/><rect x="6" y="16" width="12" height="1" fill="#999900"/><rect x="17" y="14" width="1" height="2" fill="#999900"/><rect x="19" y="8" width="1" height="10" fill="#000000"/><rect x="7" y="17" width="13" height="1" fill="#000000"/><rect x="16" y="11" width="1" height="2" fill="#000000"/><rect x="17" y="13" width="1" height="1" fill="#000000"/><rect x="18" y="12" width="1" height="4" fill="#000000"/></svg>
<div class="r" style="left:1px;top:695px;width:857px;height:219px;border-top:1px solid #fff;border-left:1px solid #fff;box-sizing:border-box;"></div>
<div class="r" style="left:2px;top:696px;width:855px;height:217px;border:1px solid #000;box-sizing:border-box;background:#fff;"></div>
<div class="r" style="left:3px;top:697px;width:837px;height:33px;background:linear-gradient(#ffffff 0px,#ffffff 11px,#f3f4f6 11px,#f3f4f6 100%);"></div>
<div class="r" style="left:39px;top:728px;width:801px;height:1px;background:#e6e6e6;"></div>
<div class="r" style="left:3px;top:730px;width:837px;height:1px;background:#a0a0a0;"></div>
<div class="r" style="left:3px;top:697px;width:35px;height:33px;background:#f5f6f8;border-left:1px solid #a0a0a0;border-top:1px solid #a0a0a0;box-sizing:border-box;"></div>
<div class="r" style="left:38px;top:697px;width:1px;height:33px;background:#a0a0a0;"></div>
<div class="r" style="left:205px;top:697px;width:1px;height:31px;background:#e3e3e3;"></div>
<div class="r" style="left:305px;top:697px;width:1px;height:31px;background:#e3e3e3;"></div>
<div class="r" style="left:405px;top:697px;width:1px;height:31px;background:#e3e3e3;"></div>
<div class="r" style="left:505px;top:697px;width:1px;height:31px;background:#e3e3e3;"></div>
<div class="r" style="left:605px;top:697px;width:1px;height:31px;background:#e3e3e3;"></div>
<div class="r" style="left:705px;top:697px;width:1px;height:31px;background:#e3e3e3;"></div>
<div class="r" style="left:805px;top:697px;width:1px;height:31px;background:#e3e3e3;"></div>
<div class="t" style="left:46px;top:701.84px;font-size:12px;line-height:12px;letter-spacing:-0.85px;">Taxon</div>
<div class="t" style="left:51px;top:714.84px;font-size:12px;line-height:12px;letter-spacing:-0.85px;">GenusOrSupragenericName</div>
<div style="position:absolute;left:3px;top:731px;width:837px;height:164px;overflow:hidden;">
<div class="r" style="left:0;top:0px;width:35px;height:22px;background:linear-gradient(to right,#ffffff 0px,#ffffff 11px,#f3f4f6 11px,#f3f4f6 33px,#dadada 33px,#dadada 34px,#ffffff 34px);"></div>
<div class="r" style="left:2px;top:21px;width:31px;height:1px;background:#e0e0e0;"></div>
<div class="r" style="left:2px;top:20px;width:31px;height:1px;background:#fcfcfc;"></div>
<div class="t" style="right:811px;top:4.84px;font-size:12px;line-height:12px;">1</div>
<div class="r" style="left:35px;top:0px;width:802px;height:21px;background:#f0f0f0;"></div>
<div class="r" style="left:35px;top:21px;width:802px;height:1px;background:#a0a0a0;"></div>
<div class="t" style="left:39px;top:4.84px;font-size:12px;line-height:12px;letter-spacing:-0.85px;color:#6d6d6d;">Order</div>
<div class="t" style="left:206px;top:4.84px;font-size:12px;line-height:12px;letter-spacing:-0.85px;color:#6d6d6d;">Family</div>
<div class="t" style="left:306px;top:4.84px;font-size:12px;line-height:12px;letter-spacing:-0.85px;color:#6d6d6d;">Genus</div>
<div class="t" style="left:406px;top:4.84px;font-size:12px;line-height:12px;letter-spacing:-0.85px;color:#6d6d6d;">Species</div>
<div class="t" style="left:506px;top:4.84px;font-size:12px;line-height:12px;letter-spacing:-0.85px;color:#6d6d6d;">Author</div>
<div class="t" style="left:606px;top:4.84px;font-size:12px;line-height:12px;letter-spacing:-0.85px;color:#6d6d6d;">CombAuth</div>
<div class="t" style="left:706px;top:4.84px;font-size:12px;line-height:12px;letter-spacing:-0.85px;color:#6d6d6d;">CommonName</div>
<div class="t" style="left:806px;top:4.84px;font-size:12px;line-height:12px;letter-spacing:-0.85px;color:#6d6d6d;">Synonym</div>
<div class="r" style="left:0;top:22px;width:35px;height:22px;background:linear-gradient(to right,#ffffff 0px,#ffffff 11px,#f3f4f6 11px,#f3f4f6 33px,#dadada 33px,#dadada 34px,#ffffff 34px);"></div>
<div class="r" style="left:2px;top:43px;width:31px;height:1px;background:#e0e0e0;"></div>
<div class="r" style="left:2px;top:42px;width:31px;height:1px;background:#fcfcfc;"></div>
<div class="t" style="right:811px;top:26.84px;font-size:12px;line-height:12px;">2</div>
<div class="r" style="left:35px;top:22px;width:802px;height:21px;background:#90ee90;"></div>
<div class="r" style="left:35px;top:43px;width:802px;height:1px;background:#a0a0a0;"></div>
<div class="t" style="left:39px;top:26.84px;font-size:12px;line-height:12px;letter-spacing:-0.85px;color:#000;">Russulales</div>
<div class="t" style="left:206px;top:26.84px;font-size:12px;line-height:12px;letter-spacing:-0.85px;color:#000;">Albatrellaceae</div>
<div class="t" style="left:306px;top:26.84px;font-size:12px;line-height:12px;letter-spacing:-0.85px;color:#000;">Albatrellus</div>
<div class="t" style="left:406px;top:26.84px;font-size:12px;line-height:12px;letter-spacing:-0.85px;color:#000;">confluens</div>
<div class="t" style="left:506px;top:26.84px;font-size:12px;line-height:12px;letter-spacing:-0.85px;color:#000;">Alb. &amp; Schwein. : ...</div>
<div class="t" style="left:606px;top:26.84px;font-size:12px;line-height:12px;letter-spacing:-0.85px;color:#000;">Kotl. &amp; Pouzar</div>
<div class="t" style="left:706px;top:26.84px;font-size:12px;line-height:12px;letter-spacing:-0.85px;color:#000;">Semmelporling</div>
<div class="t" style="left:806px;top:26.84px;font-size:12px;line-height:12px;letter-spacing:-0.85px;color:#000;">Boletus</div>
<div class="r" style="left:0;top:44px;width:35px;height:22px;background:linear-gradient(to right,#ffffff 0px,#ffffff 11px,#f3f4f6 11px,#f3f4f6 33px,#dadada 33px,#dadada 34px,#ffffff 34px);"></div>
<div class="r" style="left:2px;top:65px;width:31px;height:1px;background:#e0e0e0;"></div>
<div class="r" style="left:2px;top:64px;width:31px;height:1px;background:#fcfcfc;"></div>
<div class="t" style="right:811px;top:48.84px;font-size:12px;line-height:12px;">3</div>
<div class="r" style="left:35px;top:44px;width:802px;height:21px;background:#ffffe0;"></div>
<div class="r" style="left:35px;top:65px;width:802px;height:1px;background:#a0a0a0;"></div>
<div class="t" style="left:39px;top:48.84px;font-size:12px;line-height:12px;letter-spacing:-0.85px;color:#000;">Russulales</div>
<div class="t" style="left:206px;top:48.84px;font-size:12px;line-height:12px;letter-spacing:-0.85px;color:#000;">Albatrellaceae</div>
<div class="t" style="left:306px;top:48.84px;font-size:12px;line-height:12px;letter-spacing:-0.85px;color:#000;">Albatrellus</div>
<div class="t" style="left:406px;top:48.84px;font-size:12px;line-height:12px;letter-spacing:-0.85px;color:#000;">cristatus</div>
<div class="t" style="left:506px;top:48.84px;font-size:12px;line-height:12px;letter-spacing:-0.85px;color:#000;">Schaeff. : Fr.</div>
<div class="t" style="left:606px;top:48.84px;font-size:12px;line-height:12px;letter-spacing:-0.85px;color:#000;">Kotl. &amp; Pouzar</div>
<div class="t" style="left:706px;top:48.84px;font-size:12px;line-height:12px;letter-spacing:-0.85px;color:#000;">Kammporling</div>
<div class="t" style="left:806px;top:48.84px;font-size:12px;line-height:12px;letter-spacing:-0.85px;color:#000;">Caloporus</div>
<div class="r" style="left:0;top:66px;width:35px;height:22px;background:linear-gradient(to right,#ffffff 0px,#ffffff 11px,#f3f4f6 11px,#f3f4f6 33px,#dadada 33px,#dadada 34px,#ffffff 34px);"></div>
<div class="r" style="left:2px;top:87px;width:31px;height:1px;background:#e0e0e0;"></div>
<div class="r" style="left:2px;top:86px;width:31px;height:1px;background:#fcfcfc;"></div>
<div class="t" style="right:811px;top:70.84px;font-size:12px;line-height:12px;">4</div>
<div class="r" style="left:35px;top:66px;width:802px;height:21px;background:#ffffe0;"></div>
<div class="r" style="left:35px;top:87px;width:802px;height:1px;background:#a0a0a0;"></div>
<div class="t" style="left:39px;top:70.84px;font-size:12px;line-height:12px;letter-spacing:-0.85px;color:#000;">Russulales</div>
<div class="t" style="left:206px;top:70.84px;font-size:12px;line-height:12px;letter-spacing:-0.85px;color:#000;">Albatrellaceae</div>
<div class="t" style="left:306px;top:70.84px;font-size:12px;line-height:12px;letter-spacing:-0.85px;color:#000;">Albatrellus</div>
<div class="t" style="left:406px;top:70.84px;font-size:12px;line-height:12px;letter-spacing:-0.85px;color:#000;">ovinus</div>
<div class="t" style="left:506px;top:70.84px;font-size:12px;line-height:12px;letter-spacing:-0.85px;color:#000;">Schaeff. : Fr.</div>
<div class="t" style="left:606px;top:70.84px;font-size:12px;line-height:12px;letter-spacing:-0.85px;color:#000;">Kotl. &amp; Pouzar</div>
<div class="t" style="left:706px;top:70.84px;font-size:12px;line-height:12px;letter-spacing:-0.85px;color:#000;">Schafporling</div>
<div class="t" style="left:806px;top:70.84px;font-size:12px;line-height:12px;letter-spacing:-0.85px;color:#000;">Caloporus</div>
<div class="r" style="left:0;top:88px;width:35px;height:22px;background:linear-gradient(to right,#ffffff 0px,#ffffff 11px,#f3f4f6 11px,#f3f4f6 33px,#dadada 33px,#dadada 34px,#ffffff 34px);"></div>
<div class="r" style="left:2px;top:109px;width:31px;height:1px;background:#e0e0e0;"></div>
<div class="r" style="left:2px;top:108px;width:31px;height:1px;background:#fcfcfc;"></div>
<div class="t" style="right:811px;top:92.84px;font-size:12px;line-height:12px;">5</div>
<div class="r" style="left:35px;top:88px;width:802px;height:21px;background:#ffffe0;"></div>
<div class="r" style="left:35px;top:109px;width:802px;height:1px;background:#a0a0a0;"></div>
<div class="t" style="left:39px;top:92.84px;font-size:12px;line-height:12px;letter-spacing:-0.85px;color:#000;">Russulales</div>
<div class="t" style="left:206px;top:92.84px;font-size:12px;line-height:12px;letter-spacing:-0.85px;color:#000;">Albatrellaceae</div>
<div class="t" style="left:306px;top:92.84px;font-size:12px;line-height:12px;letter-spacing:-0.85px;color:#000;">Albatrellus</div>
<div class="t" style="left:406px;top:92.84px;font-size:12px;line-height:12px;letter-spacing:-0.85px;color:#000;">subrubescens</div>
<div class="t" style="left:506px;top:92.84px;font-size:12px;line-height:12px;letter-spacing:-0.85px;color:#000;">Murrill</div>
<div class="t" style="left:606px;top:92.84px;font-size:12px;line-height:12px;letter-spacing:-0.85px;color:#000;">Pouzar</div>
<div class="t" style="left:706px;top:92.84px;font-size:12px;line-height:12px;letter-spacing:-0.85px;color:#000;">Rötender Schafp...</div>
<div class="t" style="left:806px;top:92.84px;font-size:12px;line-height:12px;letter-spacing:-0.85px;color:#000;">Albatrellus</div>
<div class="r" style="left:0;top:110px;width:35px;height:22px;background:linear-gradient(to right,#ffffff 0px,#ffffff 11px,#f3f4f6 11px,#f3f4f6 33px,#dadada 33px,#dadada 34px,#ffffff 34px);"></div>
<div class="r" style="left:2px;top:131px;width:31px;height:1px;background:#e0e0e0;"></div>
<div class="r" style="left:2px;top:130px;width:31px;height:1px;background:#fcfcfc;"></div>
<div class="t" style="right:811px;top:114.84px;font-size:12px;line-height:12px;">6</div>
<div class="r" style="left:35px;top:110px;width:802px;height:21px;background:#ffffe0;"></div>
<div class="r" style="left:35px;top:131px;width:802px;height:1px;background:#a0a0a0;"></div>
<div class="t" style="left:39px;top:114.84px;font-size:12px;line-height:12px;letter-spacing:-0.85px;color:#000;">Russulales</div>
<div class="t" style="left:206px;top:114.84px;font-size:12px;line-height:12px;letter-spacing:-0.85px;color:#000;">Auriscalpiaceae</div>
<div class="t" style="left:306px;top:114.84px;font-size:12px;line-height:12px;letter-spacing:-0.85px;color:#000;">Clavicorona</div>
<div class="t" style="left:406px;top:114.84px;font-size:12px;line-height:12px;letter-spacing:-0.85px;color:#000;">taxophila</div>
<div class="t" style="left:506px;top:114.84px;font-size:12px;line-height:12px;letter-spacing:-0.85px;color:#000;">Thom</div>
<div class="t" style="left:606px;top:114.84px;font-size:12px;line-height:12px;letter-spacing:-0.85px;color:#000;">Doty</div>
<div class="t" style="left:706px;top:114.84px;font-size:12px;line-height:12px;letter-spacing:-0.85px;color:#000;">Trompeten-Bech...</div>
<div class="t" style="left:806px;top:114.84px;font-size:12px;line-height:12px;letter-spacing:-0.85px;color:#000;">Clavaria</div>
<div class="r" style="left:0;top:132px;width:35px;height:22px;background:linear-gradient(to right,#ffffff 0px,#ffffff 11px,#f3f4f6 11px,#f3f4f6 33px,#dadada 33px,#dadada 34px,#ffffff 34px);"></div>
<div class="r" style="left:2px;top:153px;width:31px;height:1px;background:#e0e0e0;"></div>
<div class="r" style="left:2px;top:152px;width:31px;height:1px;background:#fcfcfc;"></div>
<div class="t" style="right:811px;top:136.84px;font-size:12px;line-height:12px;">7</div>
<div class="r" style="left:35px;top:132px;width:802px;height:21px;background:#ffffe0;"></div>
<div class="r" style="left:35px;top:153px;width:802px;height:1px;background:#a0a0a0;"></div>
<div class="t" style="left:39px;top:136.84px;font-size:12px;line-height:12px;letter-spacing:-0.85px;color:#000;">Russulales</div>
<div class="t" style="left:206px;top:136.84px;font-size:12px;line-height:12px;letter-spacing:-0.85px;color:#000;">Peniophoraceae</div>
<div class="t" style="left:306px;top:136.84px;font-size:12px;line-height:12px;letter-spacing:-0.85px;color:#000;">Duportella</div>
<div class="t" style="left:406px;top:136.84px;font-size:12px;line-height:12px;letter-spacing:-0.85px;color:#000;">malenconii</div>
<div class="t" style="left:506px;top:136.84px;font-size:12px;line-height:12px;letter-spacing:-0.85px;color:#000;">Boidin &amp; Lanq.</div>
<div class="t" style="left:606px;top:136.84px;font-size:12px;line-height:12px;letter-spacing:-0.85px;color:#000;">Hjortstam</div>
<div class="t" style="left:706px;top:136.84px;font-size:12px;line-height:12px;letter-spacing:-0.85px;color:#000;">Malencon's Zysti...</div>
<div class="t" style="left:806px;top:136.84px;font-size:12px;line-height:12px;letter-spacing:-0.85px;color:#000;">Peniophora</div>
<div class="r" style="left:0;top:154px;width:35px;height:22px;background:linear-gradient(to right,#ffffff 0px,#ffffff 11px,#f3f4f6 11px,#f3f4f6 33px,#dadada 33px,#dadada 34px,#ffffff 34px);"></div>
<div class="r" style="left:2px;top:175px;width:31px;height:1px;background:#e0e0e0;"></div>
<div class="r" style="left:2px;top:174px;width:31px;height:1px;background:#fcfcfc;"></div>
<div class="t" style="right:811px;top:158.84px;font-size:12px;line-height:12px;">8</div>
<div class="r" style="left:35px;top:154px;width:802px;height:21px;background:#ffffe0;"></div>
<div class="r" style="left:35px;top:175px;width:802px;height:1px;background:#a0a0a0;"></div>
<div class="t" style="left:39px;top:158.84px;font-size:12px;line-height:12px;letter-spacing:-0.85px;color:#000;">Russulales</div>
<div class="t" style="left:206px;top:158.84px;font-size:12px;line-height:12px;letter-spacing:-0.85px;color:#000;">Hericiaceae</div>
<div class="t" style="left:306px;top:158.84px;font-size:12px;line-height:12px;letter-spacing:-0.85px;color:#000;">Hericium</div>
<div class="t" style="left:406px;top:158.84px;font-size:12px;line-height:12px;letter-spacing:-0.85px;color:#000;">coralloides</div>
<div class="t" style="left:506px;top:158.84px;font-size:12px;line-height:12px;letter-spacing:-0.85px;color:#000;">Scop.</div>
<div class="t" style="left:606px;top:158.84px;font-size:12px;line-height:12px;letter-spacing:-0.85px;color:#000;">Bern.</div>
<div class="t" style="left:706px;top:158.84px;font-size:12px;line-height:12px;letter-spacing:-0.85px;color:#000;">Ästiger Stachelbart</div>
<div class="t" style="left:806px;top:158.84px;font-size:12px;line-height:12px;letter-spacing:-0.85px;color:#000;">Hericium</div>
<div class="r" style="left:35px;top:0;width:1px;height:164px;background:#a0a0a0;"></div>
<div class="r" style="left:202px;top:0;width:1px;height:164px;background:#a0a0a0;"></div>
<div class="r" style="left:302px;top:0;width:1px;height:164px;background:#a0a0a0;"></div>
<div class="r" style="left:402px;top:0;width:1px;height:164px;background:#a0a0a0;"></div>
<div class="r" style="left:502px;top:0;width:1px;height:164px;background:#a0a0a0;"></div>
<div class="r" style="left:602px;top:0;width:1px;height:164px;background:#a0a0a0;"></div>
<div class="r" style="left:702px;top:0;width:1px;height:164px;background:#a0a0a0;"></div>
<div class="r" style="left:802px;top:0;width:1px;height:164px;background:#a0a0a0;"></div>
</div>
<div class="r" style="left:3px;top:697px;width:837px;height:1px;background:#a8a8a8;"></div>
<div class="r" style="left:3px;top:697px;width:1px;height:198px;background:#a8a8a8;"></div>
<div class="r" style="left:840px;top:697px;width:16px;height:198px;background:linear-gradient(to right,#e2e2e2 0px,#ededed 2px,#f0f0f0 50%,#ededed calc(100% - 2px),#e6e6e6 100%);"></div>
<svg style="position:absolute;left:844.5px;top:703.5px" width="8" height="5" viewBox="0 0 8 5"><defs><linearGradient id="ag697" x1="0" x2="1"><stop offset="0" stop-color="#1a1a1a"/><stop offset="0.5" stop-color="#303030"/><stop offset="1" stop-color="#909090"/></linearGradient></defs><path d="M0 4.2 L4 0 L8 4.2 Z" fill="url(#ag697)"/></svg>
<svg style="position:absolute;left:844.5px;top:883.5px" width="8" height="5" viewBox="0 0 8 5"><defs><linearGradient id="bg697" x1="0" x2="1"><stop offset="0" stop-color="#1a1a1a"/><stop offset="0.5" stop-color="#303030"/><stop offset="1" stop-color="#909090"/></linearGradient></defs><path d="M0 0.8 L4 5 L8 0.8 Z" fill="url(#bg697)"/></svg>
<div class="r" style="left:840px;top:715px;width:15px;height:16px;border:1px solid #9a9a9a;border-radius:2px;box-sizing:border-box;background:linear-gradient(to right,#f8f8f8 0%,#ededed 45%,#dadadd 50%,#c9c9cf 100%);box-shadow:inset 1px 1px 0 #fff, inset -1px 0 0 #e0e0e4;"></div>
<div class="r" style="left:3px;top:895px;width:836px;height:17px;background:linear-gradient(#e3e3e3 0px,#f0f0f0 3px,#f2f2f2 50%,#f0f0f0 calc(100% - 3px),#e8e8e8 100%);"></div>
<svg style="position:absolute;left:8px;top:899px" width="5" height="8" viewBox="0 0 5 8"><path d="M4.5 0 L0.5 4 L4.5 8 Z" fill="#404040"/></svg>
<svg style="position:absolute;left:828px;top:899px" width="5" height="8" viewBox="0 0 5 8"><path d="M0.5 0 L4.5 4 L0.5 8 Z" fill="#404040"/></svg>
<div class="r" style="left:21px;top:896px;width:547px;height:15px;border:1px solid #9a9a9a;border-radius:2px;box-sizing:border-box;background:linear-gradient(#f8f8f8 0%,#ededed 45%,#dadadd 50%,#c9c9cf 100%);box-shadow:inset 1px 1px 0 #fff, inset 0 -1px 0 #e0e0e4;"></div>
<div class="r" style="left:290px;top:900px;width:1px;height:7px;background:linear-gradient(#222,#777);border-radius:1px;"></div>
<div class="r" style="left:291px;top:900px;width:1px;height:7px;background:#cfcfcf;"></div>
<div class="r" style="left:293px;top:900px;width:1px;height:7px;background:linear-gradient(#222,#777);border-radius:1px;"></div>
<div class="r" style="left:294px;top:900px;width:1px;height:7px;background:#cfcfcf;"></div>
<div class="r" style="left:296px;top:900px;width:1px;height:7px;background:linear-gradient(#222,#777);border-radius:1px;"></div>
<div class="r" style="left:297px;top:900px;width:1px;height:7px;background:#cfcfcf;"></div>
<div class="r" style="left:839px;top:895px;width:17px;height:17px;background:#f0f0f0;"></div>
<div class="r" style="left:1px;top:913px;width:857px;height:14px;background:#f8f8f8;"></div>
<div class="r" style="left:2px;top:913px;width:855px;height:13px;background:#8a7f84;border-radius:2px;"></div>
<div class="r" style="left:3px;top:914px;width:853px;height:11px;background:linear-gradient(#cdfccd 0px,#bff4bf 3px,#a6e6a6 6px,#00b81e 6px,#08c428 8px,#18dd30 11px);border-radius:1px;"></div>
<div class="r" style="left:0px;top:926px;width:859px;height:1px;background:#4a3e42;"></div>
</body></html>
